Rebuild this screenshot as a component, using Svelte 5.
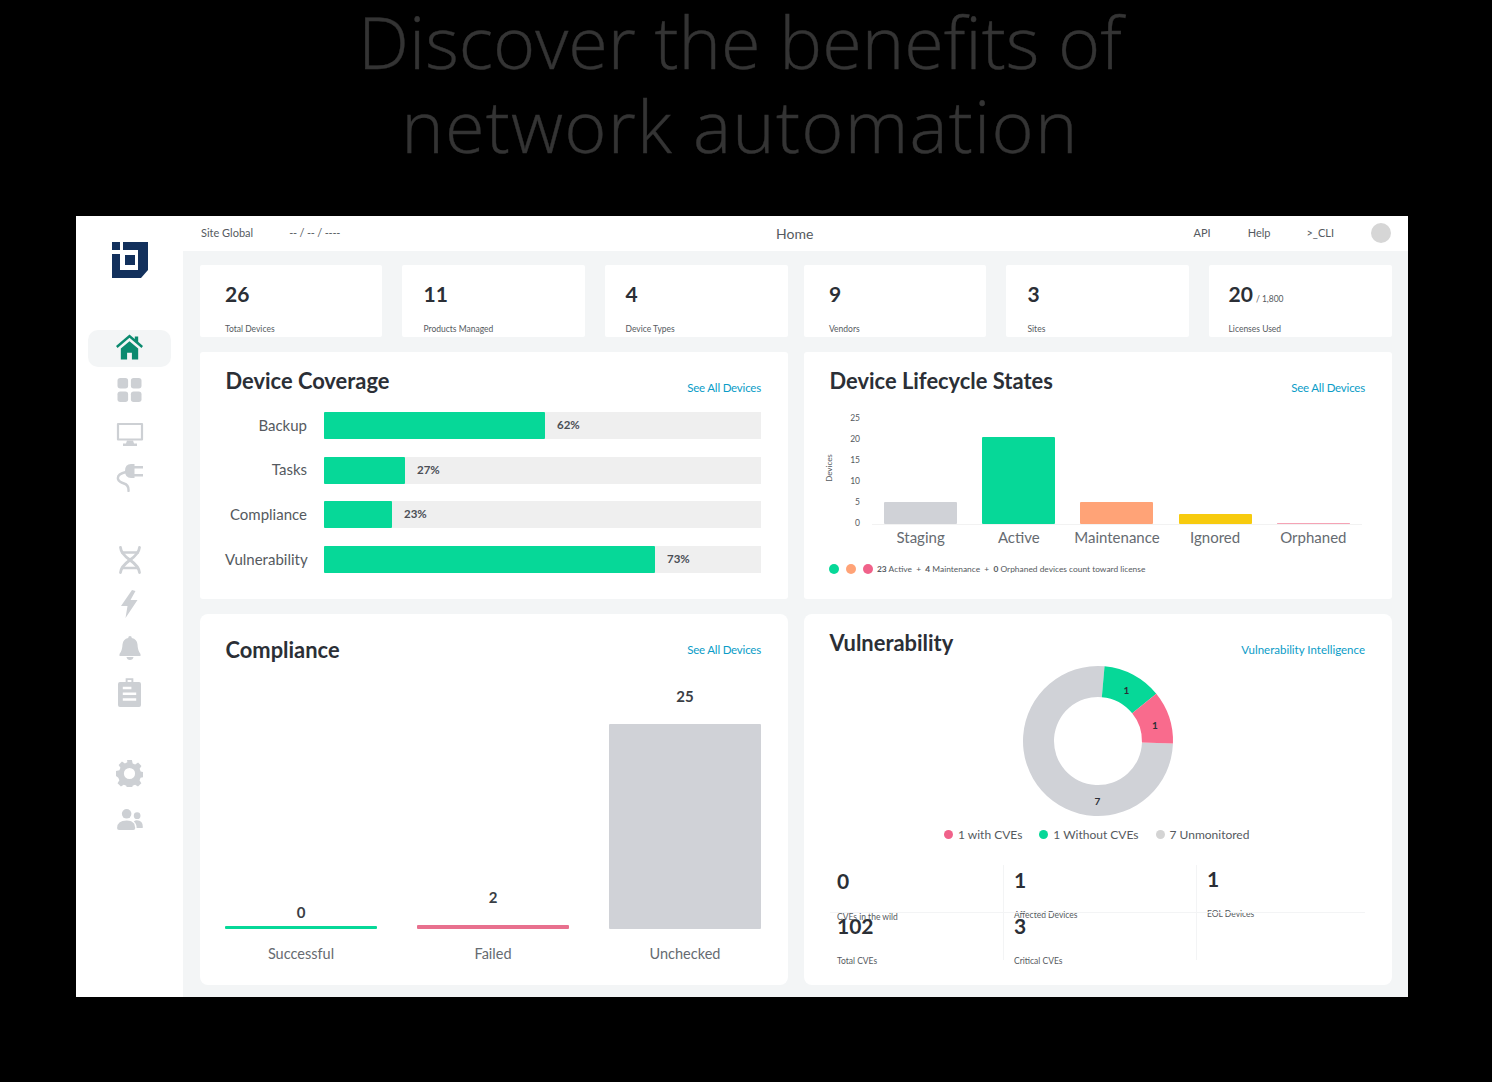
<script>
  const stats = [
    [{ v: '26', l: 'Total Devices' }, { v: '11', l: 'Products Managed' }, { v: '4', l: 'Device Types' }],
    [{ v: '9', l: 'Vendors' }, { v: '3', l: 'Sites' }, { v: '20', s: '/ 1,800', l: 'Licenses Used' }]
  ];
  const coverage = [
    { n: 'Backup', w: 221, p: '62%' },
    { n: 'Tasks', w: 81, p: '27%' },
    { n: 'Compliance', w: 68, p: '23%' },
    { n: 'Vulnerability', w: 331, p: '73%' }
  ];
  const life = [
    { n: 'Staging', h: 22, c: '#d0d2d7' },
    { n: 'Active', h: 87, c: '#06d898' },
    { n: 'Maintenance', h: 22, c: '#ffa377' },
    { n: 'Ignored', h: 10, c: '#f7cb0e' },
    { n: 'Orphaned', h: 1, c: '#f5a3b5' }
  ];
  const ticks = ['25', '20', '15', '10', '5', '0'];
  const comp = [
    { n: 'Successful', v: 0, h: 3, c: '#06d898', gap: 5 },
    { n: 'Failed', v: 2, h: 4, c: '#e8708e', gap: 19 },
    { n: 'Unchecked', v: 25, h: 205, c: '#d0d2d7', gap: 19 }
  ];
  const vuln = [
    [{ v: '0', l: 'CVEs in the wild' }, { v: '102', l: 'Total CVEs' }],
    [{ v: '1', l: 'Affected Devices' }, { v: '3', l: 'Critical CVEs' }],
    [{ v: '1', l: 'EOL Devices' }]
  ];
  function seg(a0, a1, R = 75, r = 44) {
    const p = (a, q) => {
      const t = (a * Math.PI) / 180;
      return `${(q * Math.sin(t)).toFixed(2)} ${(-q * Math.cos(t)).toFixed(2)}`;
    };
    const large = a1 - a0 > 180 ? 1 : 0;
    return `M${p(a0, R)}A${R} ${R} 0 ${large} 1 ${p(a1, R)}L${p(a1, r)}A${r} ${r} 0 ${large} 0 ${p(a0, r)}Z`;
  }
</script>

<div class="page">
  <h1>Discover the benefits of<br /><span>network automation</span></h1>
  <div class="app">
    <aside>
      <svg class="logo" viewBox="0 0 36 37" width="36" height="37">
        <path fill="#12305c" d="M0 1h8v8H0zM11 1H36V29L29 37H0V13H8V29H26V9H11zM13 14h10v10H13z" />
      </svg>
      <nav>
        <div class="item active">
          <svg viewBox="0 0 28 26" width="27" height="26"><path fill="#0b8a6f" d="M14 0 19.500 4.600V2H23v5.500L28 12l-1.600 2.100L14 3.500 1.600 14.100 0 12zM5 14.500 14 7l9 7.500V26h-6.500v-7h-5v7H5z" /></svg>
        </div>
        <div class="item">
          <svg viewBox="0 0 26 26" width="25" height="24"><g fill="#cdd0d4"><rect width="11.500" height="11.500" rx="3" /><rect x="14.500" width="11.500" height="11.500" rx="3" /><rect y="14.500" width="11.500" height="11.500" rx="3" /><rect x="14.500" y="14.500" width="11.500" height="11.500" rx="3" /></g></svg>
        </div>
        <div class="item">
          <svg viewBox="0 0 28 24" width="28" height="24"><path fill="none" stroke="#cdd0d4" stroke-width="2.200" d="M2 2h24v15.500H2z" stroke-linejoin="round" /><path fill="#cdd0d4" d="M11 18.500h6l1 3h3V24H7v-2.500h3z" /></svg>
        </div>
        <div class="item">
          <svg viewBox="0 0 28 28" width="28" height="28"><path fill="#cdd0d4" d="M18.500 0V14H15Q9 14 9 7 9 0 15 0zM18.500 2H27V4.500H18.500zM18.500 10H27V12.500H18.500z" /><path fill="none" stroke="#cdd0d4" stroke-width="2.400" stroke-linecap="round" d="M10 8Q1 10 2 15 3 18 8 19.500 13 21 12.500 27" /></svg>
        </div>
      </nav>
      <nav>
        <div class="item">
          <svg viewBox="0 0 22 28" width="22" height="28"><g fill="none" stroke="#cdd0d4" stroke-width="2.800" stroke-linecap="round"><path d="M1.500 1.500q.3 6 9.500 12.500 9 6.500 9.500 12.500M20.500 1.500q-.5 6-9.500 12.500-9 6.500-9.500 12.500" /><path stroke-width="2.400" d="M3 6.500h16M3 22h16" /></g></svg>
        </div>
        <div class="item">
          <svg viewBox="0 0 18 28" width="18" height="28"><path fill="#cdd0d4" d="M11 0 0 16h6.500L4.500 28 16.500 10H9.500L14.500 1z" /></svg>
        </div>
        <div class="item">
          <svg viewBox="0 0 22 24" width="22" height="24"><path fill="#cdd0d4" d="M11 0q1.800 0 1.800 2Q18 3 18.500 8.500q.2 6 3 9.500v2H.500v-2q2.800-3.500 3-9.500Q4 3 9.200 2 9.200 0 11 0zM7.500 21h7q-.5 3-3.500 3t-3.500-3z" /></svg>
        </div>
        <div class="item">
          <svg viewBox="0 0 24 30" width="23" height="29"><path fill="#cdd0d4" fill-rule="evenodd" d="M8 0h8v4h6q2 0 2 2v22q0 2-2 2H2q-2 0-2-2V6q0-2 2-2h6zM10 2v2h4V2zM5 9v2.500h9V9zM5 15v2.500h14V15zM5 21v2.500h14V21z" /></svg>
        </div>
      </nav>
      <nav class="last">
        <div class="item">
          <svg viewBox="0 0 28 28" width="27" height="27"><path fill="#cdd0d4" fill-rule="evenodd" d="M11.500 0h5l.8 3.500 2.600 1.100 3-1.900 3.500 3.500-1.900 3 1.100 2.600 3.400.8v5l-3.500.8-1.100 2.600 1.900 3-3.500 3.500-3-1.900-2.600 1.100-.7 3.500h-5l-.8-3.500-2.600-1.100-3 1.900-3.500-3.500 1.900-3-1.100-2.600L0 16.500v-5l3.500-.8 1.100-2.600-1.900-3 3.500-3.500 3 1.900 2.600-1.100zM14 8.200a5.800 5.800 0 1 0 0 11.600 5.800 5.800 0 0 0 0-11.600z" /></svg>
        </div>
        <div class="item">
          <svg viewBox="0 0 28 22" width="27" height="21"><g fill="#cdd0d4"><circle cx="11" cy="5" r="5" /><path d="M1 20q0-8 10-8 5.500 0 8 3.500l1 4.500q0 2-2 2H3q-2 0-2-2z" /><circle cx="22" cy="7" r="3.500" /><path d="M20 12q8-1 8 7 0 1-1.500 1H21.500q0-5-3-7z" /></g></svg>
        </div>
      </nav>
    </aside>

    <div class="main">
      <header>
        <span class="site">Site Global</span>
        <span class="date">-- / -- / ----</span>
        <span class="home">Home</span>
        <span class="links">
          <span>API</span><span>Help</span><span>&gt;_CLI</span>
        </span>
        <span class="avatar"></span>
      </header>

      <div class="content">
        {#each stats as group}
          <div class="stats">
            {#each group as s}
              <div class="stat">
                <div class="val">{s.v}{#if s.s}<small>{s.s}</small>{/if}</div>
                <div class="lab">{s.l}</div>
              </div>
            {/each}
          </div>
        {/each}

        <section class="coverage">
          <div class="head"><h2>Device Coverage</h2><a href="#a">See All Devices</a></div>
          <div class="rows">
            {#each coverage as c}
              <div class="row">
                <span class="rn">{c.n}</span>
                <div class="track">
                  <div class="fill" style="width:{c.w}px"></div>
                  <b>{c.p}</b>
                </div>
              </div>
            {/each}
          </div>
        </section>

        <section class="lifecycle">
          <div class="head"><h2>Device Lifecycle States</h2><a href="#a">See All Devices</a></div>
          <div class="chart">
            <span class="axis-title">Devices</span>
            <div class="ticks">{#each ticks as t}<span>{t}</span>{/each}</div>
            <div class="plot">
              {#each life as b}
                <div class="col">
                  <div class="barbox"><div class="bar" style="height:{b.h}px;background:{b.c}"></div></div>
                  <span>{b.n}</span>
                </div>
              {/each}
            </div>
          </div>
          <div class="note">
            <i class="g"></i><i class="o"></i><i class="p"></i>
            <span><b>23</b> Active &nbsp;+&nbsp; <b>4</b> Maintenance &nbsp;+&nbsp; <b>0</b> Orphaned devices count toward license</span>
          </div>
        </section>

        <section class="compliance">
          <div class="head"><h2>Compliance</h2><a href="#a">See All Devices</a></div>
          <div class="cols">
            {#each comp as c}
              <div class="ccol">
                <b style="margin-bottom:{c.gap}px">{c.v}</b>
                <div class="cbar" style="height:{c.h}px;background:{c.c}"></div>
                <span>{c.n}</span>
              </div>
            {/each}
          </div>
        </section>

        <section class="vuln">
          <div class="head"><h2>Vulnerability</h2><a href="#a">Vulnerability Intelligence</a></div>
          <div class="donut">
            <svg viewBox="-76 -76 152 152" width="152" height="152">
              <path fill="#d0d2d7" d={seg(92, 365)} />
              <path fill="#06d898" d={seg(5, 51)} />
              <path fill="#f96b8d" d={seg(51, 92)} />
              <text x="28.500" y="-49.500">1</text>
              <text x="57" y="-14.500">1</text>
              <text x="-0.500" y="61.500">7</text>
            </svg>
          </div>
          <div class="legend">
            <span><i class="p"></i>1 with CVEs</span>
            <span><i class="g"></i>1 Without CVEs</span>
            <span><i class="u"></i>7 Unmonitored</span>
          </div>
          <div class="vgrid">
            {#each vuln as column}
              <div class="vcol">
                {#each column as s}
                  <div class="vcell">
                    <div class="vv">{s.v}</div>
                    <div class="vl">{s.l}</div>
                  </div>
                {/each}
              </div>
            {/each}
          </div>
        </section>
      </div>
    </div>
  </div>
</div>

<style>
  :global(body) { margin: 0; background: #000; }
  .page { width: 1492px; height: 1082px; background: #000; overflow: hidden; font-family: Lato, "Noto Sans", sans-serif; color: #2b2f36; }
  h1 { margin: -1px 0 0; height: 217px; box-sizing: border-box; padding-right: 12px; text-align: center; font-family: "Open Sans", sans-serif; font-weight: 300; font-size: 72px; line-height: 84px; color: #343434; white-space: nowrap; -webkit-text-stroke: 0.400px #343434; }
  h1 span { letter-spacing: 1.200px; }
  .app { margin-left: 76px; width: 1332px; height: 781px; display: flex; background: #fff; }
  aside { width: 107px; flex: none; box-sizing: border-box; display: flex; flex-direction: column; align-items: center; }
  .logo { margin-top: 25px; margin-bottom: 52px; flex: none; }
  nav { display: flex; flex-direction: column; gap: 7px; margin-bottom: 45px; }
  nav.last { gap: 9px; margin-top: -1px; }
  .item { width: 83px; height: 37px; display: flex; align-items: center; justify-content: center; border-radius: 10px; }
  .item.active { background: #f3f5f6; margin-bottom: -2.500px; padding-bottom: 3px; box-sizing: border-box; }
  .main { flex: 1; display: flex; flex-direction: column; min-width: 0; }
  header { height: 35px; box-sizing: border-box; flex: none; display: flex; align-items: center; padding: 0 17px 2px 18px; font-size: 11px; color: #555a60; position: relative; }
  .date { margin-left: 36px; letter-spacing: -0.200px; }
  .home { position: absolute; left: 593px; top: 9px; font-size: 14px; line-height: 17px; color: #555a60; }
  .links { margin-left: auto; display: flex; gap: 36px; margin-right: 37px; }
  .links span:first-child { margin-right: 1px; }
  .avatar { width: 20px; height: 20px; border-radius: 50%; background: #d6d6d6; }
  .content { flex: 1; background: #f3f5f6; padding: 14px 16px 12px 17px; display: grid; grid-template-columns: 1fr 1fr; grid-template-rows: 72px 247px 371px; gap: 15px 16px; min-height: 0; }
  .stats { display: grid; grid-template-columns: 182px 182.500px 1fr; gap: 20px; }
  .stat { background: #fff; padding-left: 25px; border-radius: 2px; overflow: hidden; }
  .stats:first-child .stat:nth-child(2) { padding-left: 21.500px; }
  .stats:first-child .stat:nth-child(3) { padding-left: 21px; }
  .stats:nth-child(2) .stat:nth-child(2) { padding-left: 21.500px; }
  .stats:nth-child(2) .stat:nth-child(3) { padding-left: 20px; }
  .val { font-size: 21px; font-weight: 700; line-height: 26px; height: 26px; margin-top: 16px; color: #2b2f36; }
  .val small { font-size: 8.500px; line-height: 10px; font-weight: 400; margin-left: 3px; color: #555a60; }
  .lab { font-size: 8.500px; line-height: 10px; margin-top: 17px; color: #555a60; }
  section { background: #fff; position: relative; padding: 0 27px 0 25px; min-width: 0; border-radius: 3px; }
  .compliance, .vuln { border-radius: 8px; }
  .head { display: flex; justify-content: space-between; align-items: flex-start; }
  h2 { margin: 0 0 0 0.500px; font-size: 21.900px; line-height: 26px; font-weight: 700; color: #2b2f36; }
  a { font-size: 11.500px; line-height: 14px; color: #0a9cc7; text-decoration: none; letter-spacing: -0.200px; }
  .vuln a { letter-spacing: 0; }
  .coverage .head, .lifecycle .head { padding-top: 16px; }
  .coverage a, .lifecycle a { margin-top: 13px; }
  .rows { margin-top: 17px; display: flex; flex-direction: column; gap: 17.700px; }
  .row { display: flex; align-items: center; height: 27px; }
  .rn { width: 99px; box-sizing: border-box; padding: 0 17px 2px 0; text-align: right; font-size: 15px; color: #555a60; white-space: nowrap; flex: none; }
  .track { flex: 1; height: 27px; background: #efefef; display: flex; align-items: center; }
  .fill { height: 27px; background: #06d898; border-radius: 1px; }
  .track b { font-size: 11.500px; margin-left: 12px; padding-bottom: 2px; color: #4a4e55; }
  .chart { position: relative; height: 135px; margin-top: 17px; display: flex; }
  .axis-title { position: absolute; left: -14px; top: 51px; font-size: 8px; line-height: 10px; color: #555a60; transform: rotate(-90deg); }
  .ticks { width: 31px; flex: none; height: 115px; margin-top: 1px; display: flex; flex-direction: column; justify-content: space-between; align-items: flex-end; font-size: 8.500px; line-height: 10px; color: #555a60; position: relative; }
  .plot { position: relative; margin-left: 11.500px; display: flex; height: 135px; }
  .col { width: 98.200px; display: flex; flex-direction: column; align-items: center; font-size: 15px; color: #666b71; }
  .barbox { height: 112px; width: 100%; display: flex; justify-content: center; align-items: flex-end; border-bottom: 1px solid #f2f2f2; }
  .bar { width: 73px; border-radius: 1px; }
  .col span { margin-top: 3px; line-height: 18px; white-space: nowrap; }
  .note { margin-top: 16px; display: flex; align-items: center; font-size: 8.400px; color: #555a60; height: 12px; }
  .note i { width: 10px; height: 10px; border-radius: 50%; margin-right: 7px; }
  .note span { margin-left: -3px; }
  .g { background: #06d898; }
  .o { background: #ffa377; }
  .p { background: #f0628a; }
  .u { background: #d4d4d4; }
  .compliance .head { padding-top: 23px; }
  .compliance a { margin-top: 6px; }
  .cols { position: absolute; left: 25px; right: 27px; bottom: 22px; display: flex; gap: 40px; align-items: flex-end; }
  .ccol { flex: 1; display: flex; flex-direction: column; align-items: center; }
  .ccol b { font-size: 15px; line-height: 18px; color: #3a3e45; }
  .cbar { width: 100%; border-radius: 1px; }
  .ccol span { font-size: 14.500px; line-height: 18px; margin-top: 16px; color: #666b71; }
  .vuln .head { padding-top: 16px; }
  .vuln a { margin-top: 13px; }
  .donut { position: absolute; left: 217.500px; top: 50.500px; width: 152px; height: 152px; }
  .donut text { font-family: Lato, sans-serif; font-size: 10px; font-weight: 700; fill: #2b2f36; text-anchor: middle; dominant-baseline: middle; }
  .legend { position: absolute; left: 140px; top: 212px; display: flex; gap: 17px; font-size: 12px; line-height: 18px; color: #555a60; }
  .legend span { display: flex; align-items: center; }
  .legend i { width: 9px; height: 9px; border-radius: 50%; margin-right: 5px; margin-top: -2px; }
  .vgrid { position: absolute; left: 26px; top: 251px; display: flex; }
  .vcol { flex: none; width: 193px; height: 95px; border-left: 1px solid #f3f4f5; box-sizing: border-box; padding-left: 10px; }
  .vcol:first-child { width: 173px; border-left: 0; padding-left: 7px; }
  .vcol:last-child { width: 169px; }
  .vcell { height: 47.500px; box-sizing: border-box; }
  .vcell:nth-child(2) { margin-top: -3.500px; }
  .vcell:first-child { position: relative; }
  .vcell:first-child::after { content: ''; position: absolute; left: -10px; right: 0; top: 46.500px; height: 1px; background: #f3f4f5; }
  .vcol:first-child .vcell:first-child::after { left: -7px; }
  .vv { font-size: 21px; font-weight: 700; line-height: 24px; padding-top: 5px; color: #2b2f36; }
  .vl { font-size: 8.500px; line-height: 10px; margin-top: 18px; color: #555a60; white-space: nowrap; }
  .vcol:first-child .vcell:first-child .vv { padding-top: 4px; }
  .vcol:first-child .vcell:first-child .vl { margin-top: 19px; }
  .vcol:nth-child(2) .vcell:first-child .vv { padding-top: 3px; }
  .vcol:nth-child(3) .vcell:first-child .vv { padding-top: 2px; }
</style>
